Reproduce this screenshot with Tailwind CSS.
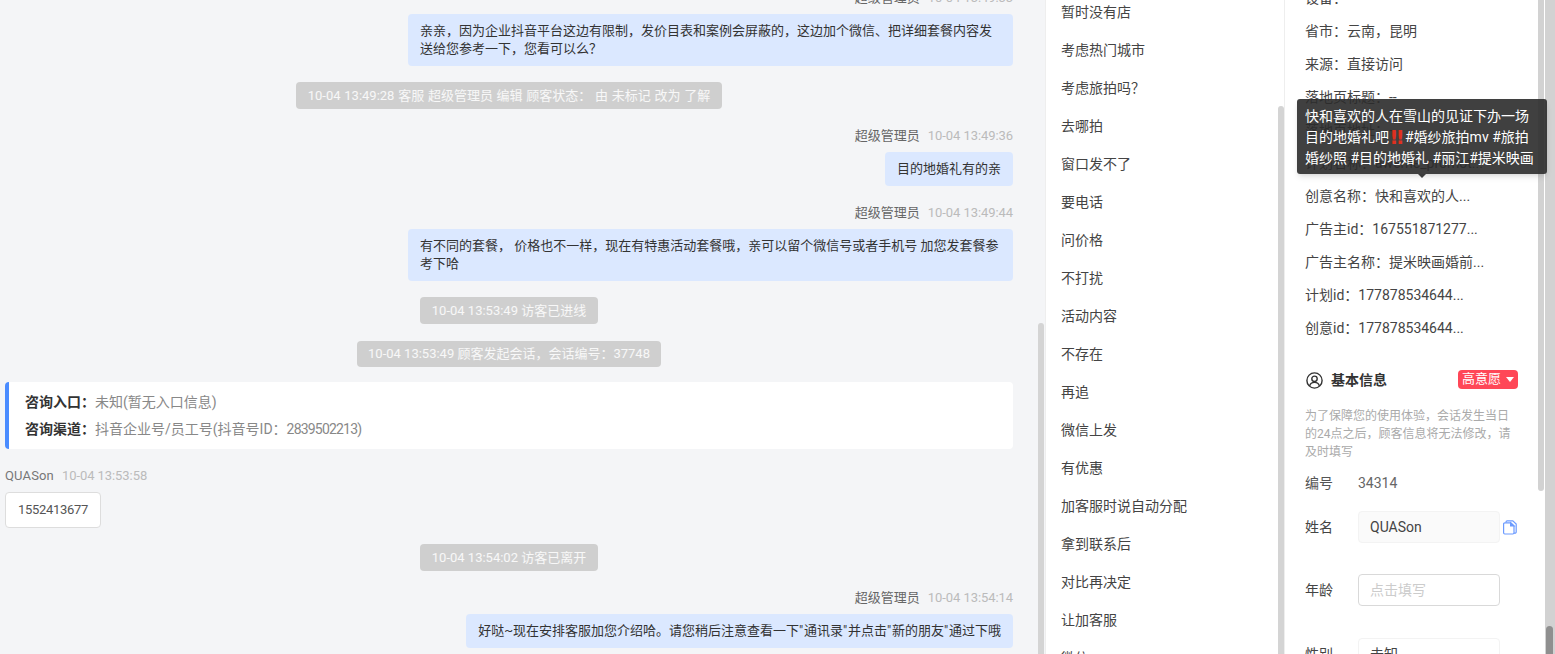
<!DOCTYPE html>
<html lang="zh">
<head>
<meta charset="utf-8">
<script src="https://cdn.jsdelivr.net/npm/@tailwindcss/browser@4"></script>
</head>
<body class="bg-[#f4f5f7]">
<div class="relative flex h-[654px] w-[1555px] overflow-hidden font-['Roboto','Noto_Sans_CJK_SC',sans-serif] text-[13px] leading-[18px] text-[#444]">

  <!-- chat -->
  <main class="relative h-full w-[1045px] shrink-0 bg-[#f4f5f7] pl-[5px] pr-[32px] pt-px">
    <div class="-mt-[12px] flex flex-col">
      <div class="mb-[7px] flex justify-end gap-2"><span class="text-[#666]">超级管理员</span><span class="tracking-[-0.07px] text-[#bbb]">10-04 13:49:33</span></div>
      <div class="w-[605px] self-end rounded bg-[#dbe8ff] px-3 py-2 text-[#333]">亲亲，因为企业抖音平台这边有限制，发价目表和案例会屏蔽的，这边加个微信、把详细套餐内容发送给您参考一下，您看可以么？</div>

      <div class="mt-4 self-center rounded-sm bg-[#cfcfcf] px-3 py-[4.5px] text-white/85 [word-spacing:0.5px]">10-04 13:49:28 客服 超级管理员 编辑 顾客状态： 由 未标记 改为 了解</div>

      <div class="mb-[7px] mt-[18px] flex justify-end gap-2"><span class="text-[#666]">超级管理员</span><span class="tracking-[-0.07px] text-[#bbb]">10-04 13:49:36</span></div>
      <div class="self-end rounded bg-[#dbe8ff] px-3 py-2 text-[#333]">目的地婚礼有的亲</div>

      <div class="mb-[7px] mt-[18px] flex justify-end gap-2"><span class="text-[#666]">超级管理员</span><span class="tracking-[-0.07px] text-[#bbb]">10-04 13:49:44</span></div>
      <div class="w-[605px] self-end rounded bg-[#dbe8ff] px-3 py-2 text-[#333]">有不同的套餐， 价格也不一样，现在有特惠活动套餐哦，亲可以留个微信号或者手机号 加您发套餐参考下哈</div>

      <div class="mt-4 self-center rounded-sm bg-[#cfcfcf] px-3 py-[4.5px] text-white/85">10-04 13:53:49 访客已进线</div>
      <div class="mt-[17px] self-center rounded-sm bg-[#cfcfcf] px-[11.5px] py-[4px] text-white/85">10-04 13:53:49 顾客发起会话，会话编号：37748</div>

      <div class="mt-[15px] flex flex-col gap-[9px] rounded-sm border-l-4 border-[#4a8cff] bg-white py-[11px] pl-4 text-sm leading-[18px]">
        <div><b class="font-bold text-[#333]">咨询入口：</b><span class="text-[#888]">未知(暂无入口信息)</span></div>
        <div><b class="font-bold text-[#333]">咨询渠道：</b><span class="text-[#888]">抖音企业号/员工号(抖音号ID：<span class="tracking-[-0.8px]">2839502213)</span></span></div>
      </div>

      <div class="mb-[7px] mt-[18px] flex gap-2"><span class="tracking-[0.15px] text-[#777]">QUASon</span><span class="tracking-[-0.07px] text-[#bbb]">10-04 13:53:58</span></div>
      <div class="self-start rounded border border-[#ddd] bg-white px-3 py-2 tracking-[-0.3px] text-[#555]">1552413677</div>

      <div class="mt-4 self-center rounded-sm bg-[#cfcfcf] px-3 py-[4.5px] text-white/85">10-04 13:54:02 访客已离开</div>

      <div class="mb-[7px] mt-[18px] flex justify-end gap-2"><span class="text-[#666]">超级管理员</span><span class="tracking-[-0.07px] text-[#bbb]">10-04 13:54:14</span></div>
      <div class="self-end rounded bg-[#dbe8ff] px-3 py-2 text-[#333]">好哒~现在安排客服加您介绍哈。请您稍后注意查看一下<span class="tracking-[0.8px]">"</span>通讯录<span class="tracking-[0.8px]">"</span>并点击<span class="tracking-[0.8px]">"</span>新的朋友<span class="tracking-[0.8px]">"</span>通过下哦</div>
    </div>
    <div class="absolute right-px top-[323px] h-[340px] w-1.5 rounded-t-md bg-[#d4d4d4]"></div>
  </main>

  <!-- quick replies -->
  <section class="relative h-full w-[240px] shrink-0 border-l border-r border-[#eee] bg-white">
    <ul class="-mt-[7px] pl-[15px] text-sm text-[#444]">
      <li class="flex h-[38px] items-center">暂时没有店</li>
      <li class="flex h-[38px] items-center">考虑热门城市</li>
      <li class="flex h-[38px] items-center">考虑旅拍吗？</li>
      <li class="flex h-[38px] items-center">去哪拍</li>
      <li class="flex h-[38px] items-center">窗口发不了</li>
      <li class="flex h-[38px] items-center">要电话</li>
      <li class="flex h-[38px] items-center">问价格</li>
      <li class="flex h-[38px] items-center">不打扰</li>
      <li class="flex h-[38px] items-center">活动内容</li>
      <li class="flex h-[38px] items-center">不存在</li>
      <li class="flex h-[38px] items-center">再追</li>
      <li class="flex h-[38px] items-center">微信上发</li>
      <li class="flex h-[38px] items-center">有优惠</li>
      <li class="flex h-[38px] items-center">加客服时说自动分配</li>
      <li class="flex h-[38px] items-center">拿到联系后</li>
      <li class="flex h-[38px] items-center">对比再决定</li>
      <li class="flex h-[38px] items-center">让加客服</li>
      <li class="flex h-[38px] items-center">微信</li>
    </ul>
    <div class="absolute right-0 top-[106px] h-[560px] w-1.5 rounded-t-md bg-[#d4d4d4]"></div>
  </section>

  <!-- customer info -->
  <aside class="relative h-full w-[260px] shrink-0 bg-white pl-5 pr-[27px]">
    <ul class="-mt-[19px] text-sm text-[#444]">
      <li class="flex h-[33px] items-center">设备：</li>
      <li class="flex h-[33px] items-center">省市：云南，昆明</li>
      <li class="flex h-[33px] items-center">来源：直接访问</li>
      <li class="flex h-[33px] items-center">落地页标题：--</li>
      <li class="flex h-[33px] items-center">落地页地址：--</li>
      <li class="flex h-[33px] items-center">计划名称：aweme_promot...</li>
      <li class="flex h-[33px] items-center">创意名称：快和喜欢的人...</li>
      <li class="flex h-[33px] items-center">广告主id：167551871277...</li>
      <li class="flex h-[33px] items-center">广告主名称：提米映画婚前...</li>
      <li class="flex h-[33px] items-center">计划id：177878534644...</li>
      <li class="flex h-[33px] items-center">创意id：177878534644...</li>
    </ul>

    <div class="mt-[26px] flex h-5 items-center">
      <svg class="ml-px h-[17px] w-[17px] text-[#333]" viewBox="0 0 17 17" fill="none" stroke="currentColor" stroke-width="1.4"><circle cx="8.5" cy="8.5" r="7.6"/><circle cx="8.5" cy="6.8" r="2.7"/><path d="M3.6 14c.6-2.3 2.5-3.6 4.9-3.6s4.3 1.3 4.9 3.6"/></svg>
      <b class="ml-[8px] text-sm font-bold text-[#333]">基本信息</b>
      <span class="ml-auto flex h-[19px] w-[60px] -translate-y-px items-center gap-[5px] rounded-sm bg-[#ff4757] pl-1 text-white">高意愿<i class="h-0 w-0 border-x-[4px] border-t-[5px] border-x-transparent border-t-white"></i></span>
    </div>
    <p class="mt-[17px] w-[212px] text-xs leading-[18px] text-[#aaa]">为了保障您的使用体验，会话发生当日的24点之后，顾客信息将无法修改，请及时填写</p>

    <div class="mt-[13px] flex h-[18px] items-center text-sm"><span class="w-[53px] text-[#555]">编号</span><span class="text-[#666]">34314</span></div>

    <div class="mt-[19px] flex items-center text-sm">
      <span class="w-[53px] text-[#444]">姓名</span>
      <div class="flex h-8 w-[142px] items-center rounded-sm border border-[#f3f3f3] bg-[#fafafa] px-[11px] text-[#444]">QUASon</div>
      <svg class="ml-[3px] h-[15px] w-[14px]" viewBox="0 0 14 15" fill="none" stroke="#6c9bff" stroke-width="1.2"><path d="M3 2.6V2a1.2 1.2 0 0 1 1.2-1.2h5.6L13.2 4v8a1.2 1.2 0 0 1-1.2 1.2h-1"/><path d="M1.8 2.8H7.6L11 6v6.8a1.2 1.2 0 0 1-1.2 1.2H1.8A1.2 1.2 0 0 1 .6 12.8V4a1.2 1.2 0 0 1 1.2-1.2z"/><path d="M7.6 2.8 11 6H7.6z" fill="#6c9bff"/></svg>
    </div>

    <div class="mt-[31px] flex items-center text-sm">
      <span class="w-[53px] text-[#444]">年龄</span>
      <div class="flex h-8 w-[142px] items-center rounded-sm border border-[#d9d9d9] bg-white px-[11px] text-[#ccc]">点击填写</div>
    </div>

    <div class="mt-[32px] flex items-center text-sm">
      <span class="w-[53px] text-[#444]">性别</span>
      <div class="flex h-8 w-[142px] items-center rounded-sm border border-[#f3f3f3] bg-white px-[11px] text-[#444]">未知</div>
    </div>
    <div class="absolute right-px top-0 h-[491px] w-1.5 rounded-b-md bg-[#d2d2d2]"></div>
  </aside>

  <!-- page scrollbar -->
  <div class="relative h-full flex-1 bg-[#d2d2d2]">
    <div class="absolute left-[1px] top-[626px] h-[40px] w-[7px] rounded-t-md bg-[#8f8f8f]"></div>
  </div>

  <!-- tooltip -->
  <div class="absolute left-[1297px] top-[99px] h-[75px] w-[250px] rounded-[3px] bg-[#2b2b2b]/90 px-2 py-[7px] text-sm leading-[21px] text-white shadow-md">
    快和喜欢的人在雪山的见证下办一场<br>目的地婚礼吧<span class="inline-block w-4 translate-y-[2px] text-center font-['DejaVu_Sans'] text-[20px] font-bold leading-[14px] text-[#e0301e]">‼</span>#婚纱旅拍mv #旅拍<br>婚纱照 #目的地婚礼 #丽江#提米映画
    <i class="absolute left-[121px] top-full h-0 w-0 border-x-[4px] border-t-[4px] border-x-transparent border-t-[#3c3c3c]"></i>
  </div>
</div>
</body>
</html>
